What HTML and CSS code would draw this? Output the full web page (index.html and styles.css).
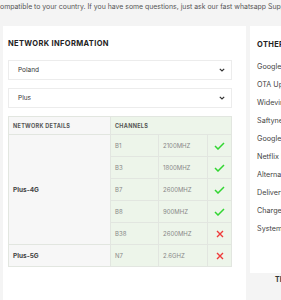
FILE: index.html
```html
<!DOCTYPE html>
<html lang="en">
<head>
<meta charset="UTF-8">
<meta name="viewport" content="width=device-width, initial-scale=1.0">
<title>Network Information</title>
<link rel="stylesheet" href="styles.css">
</head>
<body>

<p class="intro">ompatible to your country. If you have some questions, just ask our fast whatsapp Support team.</p>

<div class="layout">
  <div class="card main">
    <h2>Network Information</h2>
    <div class="select">
      <span>Poland</span>
      <svg width="6" height="4" viewBox="0 0 6 4"><path d="M0.8 0.8 L3 3 L5.2 0.8" fill="none" stroke="#333" stroke-width="1.2"/></svg>
    </div>
    <div class="select">
      <span>Plus</span>
      <svg width="6" height="4" viewBox="0 0 6 4"><path d="M0.8 0.8 L3 3 L5.2 0.8" fill="none" stroke="#333" stroke-width="1.2"/></svg>
    </div>

    <table class="networks">
      <colgroup>
        <col class="col-name">
        <col class="col-band">
        <col class="col-freq">
        <col class="col-status">
      </colgroup>
      <tr>
        <th class="details">Network Details</th>
        <th class="channels" colspan="3">Channels</th>
      </tr>
      <tr>
        <td class="name" rowspan="5">Plus-4G</td>
        <td class="band">B1</td>
        <td class="freq">2100MHZ</td>
        <td class="status"><svg width="11" height="8" viewBox="0 0 11 8"><path d="M1 4 L4 7 L10 1" fill="none" stroke="#32d632" stroke-width="1.5"/></svg></td>
      </tr>
      <tr>
        <td class="band">B3</td>
        <td class="freq">1800MHZ</td>
        <td class="status"><svg width="11" height="8" viewBox="0 0 11 8"><path d="M1 4 L4 7 L10 1" fill="none" stroke="#32d632" stroke-width="1.5"/></svg></td>
      </tr>
      <tr>
        <td class="band">B7</td>
        <td class="freq">2600MHZ</td>
        <td class="status"><svg width="11" height="8" viewBox="0 0 11 8"><path d="M1 4 L4 7 L10 1" fill="none" stroke="#32d632" stroke-width="1.5"/></svg></td>
      </tr>
      <tr>
        <td class="band">B8</td>
        <td class="freq">900MHZ</td>
        <td class="status"><svg width="11" height="8" viewBox="0 0 11 8"><path d="M1 4 L4 7 L10 1" fill="none" stroke="#32d632" stroke-width="1.5"/></svg></td>
      </tr>
      <tr>
        <td class="band">B38</td>
        <td class="freq">2600MHZ</td>
        <td class="status"><svg width="8" height="8" viewBox="0 0 8 8"><path d="M1 1 L7 7 M7 1 L1 7" fill="none" stroke="#ef3b3b" stroke-width="1.4"/></svg></td>
      </tr>
      <tr>
        <td class="name">Plus-5G</td>
        <td class="band">N7</td>
        <td class="freq">2.6GHZ</td>
        <td class="status"><svg width="8" height="8" viewBox="0 0 8 8"><path d="M1 1 L7 7 M7 1 L1 7" fill="none" stroke="#ef3b3b" stroke-width="1.4"/></svg></td>
      </tr>
    </table>
  </div>

  <div class="side">
    <div class="card other">
      <h2>Other Features</h2>
      <ul>
        <li>Google Play</li>
        <li>OTA Updates</li>
        <li>Widevine L1</li>
        <li>Saftynet</li>
        <li>Google Pay</li>
        <li>Netflix HD</li>
        <li>Alternative Apps</li>
        <li>Delivery</li>
        <li>Charger</li>
        <li>System Language</li>
      </ul>
    </div>
    <div class="thanks">Thank you</div>
  </div>
</div>

</body>
</html>
```

FILE: styles.css
```css
html, body {
  overflow: hidden;
}

body {
  font-family: "Inter", "Noto Sans", sans-serif;
  background-color: #f4f4f4;
  margin: 0;
  padding: 0;
  color: #444;
}

.intro {
  margin: 0;
  padding-top: 2px;
  font-size: 6.9px;
  line-height: 9px;
  white-space: nowrap;
  color: #555;
}

.layout {
  display: flex;
  gap: 4px;
  margin-top: 15px;
  padding-left: 3px;
}

.card {
  background-color: #fff;
}

.main {
  flex: 0 0 242px;
  box-sizing: border-box;
  padding: 13px 14px 40px 5px;
}

h2 {
  margin: 0;
  font-size: 7.5px;
  line-height: 10px;
  font-weight: 700;
  text-transform: uppercase;
  letter-spacing: 0.35px;
  color: #222;
}

.main h2 {
  margin-bottom: 11px;
}

.select {
  display: flex;
  align-items: center;
  justify-content: space-between;
  height: 20px;
  box-sizing: border-box;
  border: 1px solid #ececec;
  padding: 0 6px 0 9px;
  margin-bottom: 8px;
  font-size: 6.5px;
  color: #333;
}

.networks {
  width: 223px;
  border-collapse: collapse;
  table-layout: fixed;
}

.col-name {
  width: 102px;
}

.col-band {
  width: 48px;
}

.col-freq {
  width: 49px;
}

.col-status {
  width: 24px;
}

.networks th,
.networks td {
  border: 1px solid #e2e6e0;
  padding: 0 0 0 4px;
  text-align: left;
}

.networks th {
  height: 17px;
  font-size: 5.5px;
  font-weight: 700;
  text-transform: uppercase;
  letter-spacing: 0.3px;
  color: #555;
}

.details {
  background-color: #f7f7f7;
}

.channels {
  background-color: #edf5ea;
}

.networks td {
  height: 21px;
  font-size: 6px;
  color: #888;
}

.networks td.name {
  background-color: #f7f7f7;
  font-weight: 700;
  color: #444;
  font-size: 6.5px;
}

.band,
.freq,
.status {
  background-color: #edf5ea;
}

.networks td.status {
  padding: 0;
  text-align: center;
}

.status svg {
  display: block;
  margin: 0 auto;
}

.side {
  flex: 0 0 200px;
}

.other {
  height: 247px;
  box-sizing: border-box;
  padding: 14px 7px 0 7px;
}

.other ul {
  list-style: none;
  margin: 8px 0 0;
  padding: 0;
}

.other li {
  font-size: 7.2px;
  line-height: 18px;
  color: #444;
  white-space: nowrap;
}

.thanks {
  padding: 2px 0 0 25px;
  font-size: 7px;
  font-weight: 700;
  color: #333;
}
```
